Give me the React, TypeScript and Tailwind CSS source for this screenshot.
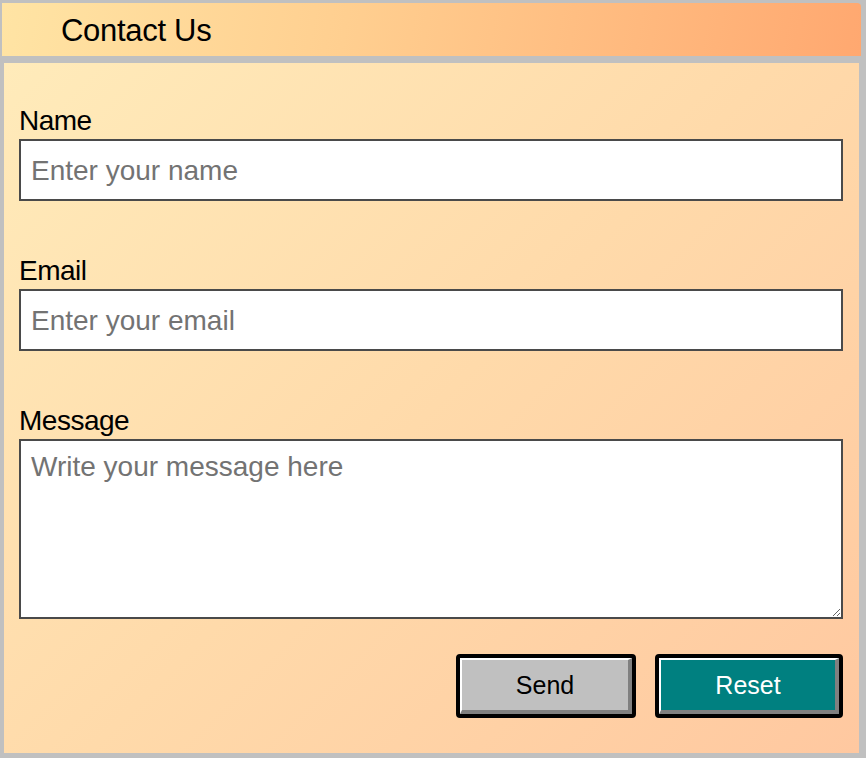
import React from 'react';

function Field({ label, placeholder }: { label: string; placeholder: string }) {
  return (
    <div className="flex flex-col">
      <label className="pt-[3px] text-[28px] leading-[32px] text-black tracking-[-0.5px]">{label}</label>
      <input
        type="text"
        placeholder={placeholder}
        className="mt-[2px] h-[62px] w-full border-2 border-[#4a4a4a] bg-white px-[10px] pt-[2px] text-[28px] text-black outline-none placeholder:text-[#737373]"
      />
    </div>
  );
}

export default function App() {
  return (
    <div className="flex h-[758px] w-full flex-col bg-[#c0c0c0] font-['Liberation_Sans',Arial,sans-serif]">
      {/* title bar */}
      <div className="mt-[3px] ml-[2px] mr-[5px] flex h-[53px] items-center rounded-tr-[4px] bg-[linear-gradient(100deg,#ffe4a4_0%,#ffcf90_40%,#ffa870_100%)] pl-[59px]">
        <span className="pt-[2px] text-[31px] leading-none text-black tracking-[-0.3px]">Contact Us</span>
      </div>

      {/* form body */}
      <div className="mt-[7px] ml-[4px] mr-[7px] flex h-[690px] flex-col bg-[linear-gradient(135deg,#ffebba_0%,#ffdaaa_50%,#ffc8a0_100%)] pl-[15px] pr-[16px] pt-[39px]">
        <Field label="Name" placeholder="Enter your name" />
        <div className="mt-[51px]">
          <Field label="Email" placeholder="Enter your email" />
        </div>
        <div className="mt-[51px] flex flex-col">
          <label className="pt-[3px] text-[28px] leading-[32px] text-black tracking-[-0.5px]">Message</label>
          <textarea
            placeholder="Write your message here"
            className="mt-[2px] h-[180px] w-full border-2 border-[#4a4a4a] bg-white px-[10px] pt-[10px] text-[28px] leading-[32px] text-black outline-none placeholder:text-[#737373]"
          />
        </div>

        <div className="mt-[35px] flex justify-end gap-[19px]">
          <button className="h-[64px] w-[180px] rounded-[4px] border-4 border-black bg-[#c0c0c0]">
            <div className="flex h-full w-full items-center justify-center border-t-2 border-l-2 border-b-4 border-r-4 border-t-white border-l-white border-b-[#808080] border-r-[#808080] pt-[2px] text-[25px] text-black">
              Send
            </div>
          </button>
          <button className="h-[64px] w-[188px] rounded-[4px] border-4 border-black bg-[#008080]">
            <div className="flex h-full w-full items-center justify-center border-t-2 border-l-2 border-b-4 border-r-4 border-t-white border-l-white border-b-[#808080] border-r-[#808080] pt-[2px] text-[25px] text-white">
              Reset
            </div>
          </button>
        </div>
      </div>
    </div>
  );
}
